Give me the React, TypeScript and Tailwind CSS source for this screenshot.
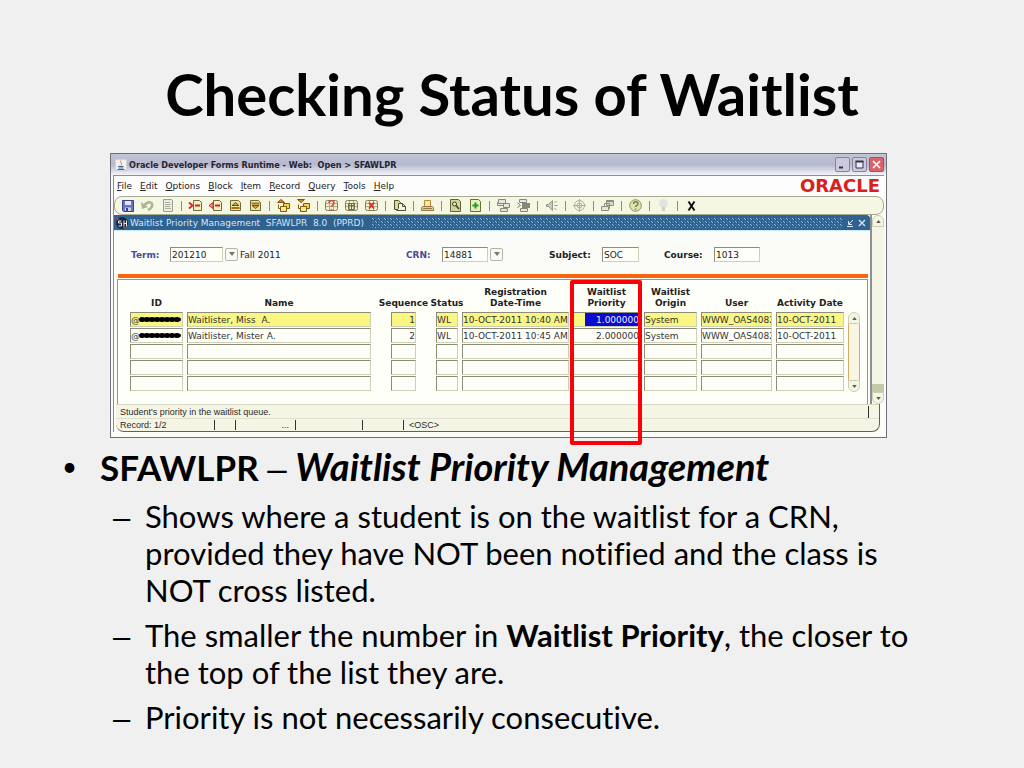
import React from "react";

type Waitlister = {
  id: string;
  name: string;
  sequence: string;
  status: string;
  registered: string;
  priority: string;
  origin: string;
  user: string;
  activity: string;
};

type ColumnKey = keyof Waitlister;

const emptyRow: Waitlister = {
  id: "",
  name: "",
  sequence: "",
  status: "",
  registered: "",
  priority: "",
  origin: "",
  user: "",
  activity: "",
};

const rows: Waitlister[] = [
  {
    id: "@",
    name: "Waitlister, Miss  A.",
    sequence: "1",
    status: "WL",
    registered: "10-OCT-2011 10:40 AM",
    priority: "1.000000",
    origin: "System",
    user: "WWW_OAS4082",
    activity: "10-OCT-2011",
  },
  {
    id: "@",
    name: "Waitlister, Mister A.",
    sequence: "2",
    status: "WL",
    registered: "10-OCT-2011 10:45 AM",
    priority: "2.000000",
    origin: "System",
    user: "WWW_OAS4082",
    activity: "10-OCT-2011",
  },
  emptyRow,
  emptyRow,
  emptyRow,
];

// Name has no fixed width, it takes whatever is left
const columns: { key: ColumnKey; title: string[]; width: string; pad: string; right?: boolean }[] = [
  { key: "id", title: ["ID"], width: "w-[57px]", pad: "pr-1" },
  { key: "name", title: ["Name"], width: "", pad: "pr-5" },
  { key: "sequence", title: ["Sequence"], width: "w-[45px]", pad: "pr-5", right: true },
  { key: "status", title: ["Status"], width: "w-[26px]", pad: "pr-1" },
  { key: "registered", title: ["Registration", "Date-Time"], width: "w-[111px]", pad: "pr-1" },
  { key: "priority", title: ["Waitlist", "Priority"], width: "w-[71px]", pad: "pr-1", right: true },
  { key: "origin", title: ["Waitlist", "Origin"], width: "w-[57px]", pad: "pr-1" },
  { key: "user", title: ["User"], width: "w-[75px]", pad: "pr-1" },
  { key: "activity", title: ["Activity Date"], width: "w-[68px]", pad: "" },
];

const menus = ["File", "Edit", "Options", "Block", "Item", "Record", "Query", "Tools", "Help"];

const Icon = ({ children }: { children: React.ReactNode }) => (
  <svg viewBox="0 0 15 15" className="block size-[15px]" fill="none" strokeWidth="1">
    {children}
  </svg>
);

const FolderSheet = () => <path d="M2.5 2.5h8l2 2v8h-10z" fill="#e9e5a4" stroke="#6f6a3a" />;

const Grid = () => (
  <>
    <rect x="1.5" y="2.5" width="12" height="10" rx="2" fill="#f3f1d2" stroke="#7d8054" />
    <path d="M2 5.5h11M2 8.5h11M5.5 3v9M9.5 3v9" stroke="#a9ac7c" />
  </>
);

const Folders = () => (
  <>
    <path d="M7.5 5.5h6v5h-6z" fill="#f4d04d" stroke="#7a5c12" />
    <path d="M4.5 8.5h6v5h-6z" fill="#fbe88a" stroke="#7a5c12" />
  </>
);

const toolGroups: { label: string; icon: React.ReactNode }[][] = [
  [
    {
      label: "Save",
      icon: (
        <Icon>
          <path d="M2.5 2.5h11v11h-10l-1-1z" fill="#6a74c0" stroke="#39428c" />
          <path d="M5 3h6v4H5z" fill="#e4e8fa" />
          <path d="M5 9.5h6V13H5z" fill="#c9cfe8" />
          <path d="M6 10h2v3H6z" fill="#39428c" />
        </Icon>
      ),
    },
    {
      label: "Rollback",
      icon: (
        <Icon>
          <path d="M4 8c2-4 7-5 8-2 .8 2.5-1 4.5-4 6" stroke="#a9b692" strokeWidth="2.6" />
          <path d="M1 4l1 7 6-2z" fill="#a9b692" />
        </Icon>
      ),
    },
    {
      label: "Select",
      icon: (
        <Icon>
          <path d="M3.5 1.5h8l1 1v11h-9z" fill="#eceddf" stroke="#9b9e90" />
          <path d="M5 4.5h5M5 6.5h6M5 8.5h5M5 10.5h6" stroke="#a9ac9e" />
        </Icon>
      ),
    },
  ],
  [
    {
      label: "Insert record",
      icon: (
        <Icon>
          <path d="M5.5 2.5h6l2 2v8h-8z" fill="#f2efc0" stroke="#6f6a3a" />
          <path d="M1 4.5l3.5 3L1 10.5" stroke="#d5232a" strokeWidth="1.8" />
          <path d="M7 7.5h5" stroke="#d5232a" strokeWidth="2" />
        </Icon>
      ),
    },
    {
      label: "Remove record",
      icon: (
        <Icon>
          <path d="M5.5 2.5h6l2 2v8h-8z" fill="#f2efc0" stroke="#6f6a3a" />
          <path d="M5 4.5v6L1 7.5z" fill="#f2a0a0" stroke="#c8282e" />
          <path d="M7 7.5h5" stroke="#d5232a" strokeWidth="2" />
        </Icon>
      ),
    },
    {
      label: "Previous record",
      icon: (
        <Icon>
          <FolderSheet />
          <path d="M4 7.5L7.5 4.5l3.5 3z" fill="#d9a441" stroke="#7a4a10" />
          <path d="M3.5 10h8" stroke="#a87018" strokeWidth="2" />
        </Icon>
      ),
    },
    {
      label: "Next record",
      icon: (
        <Icon>
          <FolderSheet />
          <path d="M3.5 5.5h8" stroke="#a87018" strokeWidth="2" />
          <path d="M4 7.5h7l-3.5 3z" fill="#d9a441" stroke="#7a4a10" />
        </Icon>
      ),
    },
  ],
  [
    {
      label: "Previous block",
      icon: (
        <Icon>
          <Folders />
          <path d="M1.5 4.5L5 1.5l3.5 3z" fill="#d9902a" stroke="#8a4a10" />
          <path d="M2.5 6.5v4h2" stroke="#7a5c12" />
        </Icon>
      ),
    },
    {
      label: "Next block",
      icon: (
        <Icon>
          <Folders />
          <path d="M1.5 1.5h7L5 4.5z" fill="#d9902a" stroke="#8a4a10" />
          <path d="M2.5 6.5v4h2" stroke="#7a5c12" />
        </Icon>
      ),
    },
  ],
  [
    {
      label: "Enter query",
      icon: (
        <Icon>
          <Grid />
          <path d="M5 5c0-3 5-3 5 0 0 2-2.5 2-2.5 4M7.5 11v2" stroke="#e0484e" strokeWidth="1.6" />
        </Icon>
      ),
    },
    {
      label: "Execute query",
      icon: (
        <Icon>
          <Grid />
          <path d="M4.5 5.5h6v6h-6zM4.5 7.5h6M7.5 6v5" stroke="#6c7042" />
        </Icon>
      ),
    },
    {
      label: "Cancel query",
      icon: (
        <Icon>
          <Grid />
          <path d="M5 4.5l5 6M10 4.5l-5 6" stroke="#d5232a" strokeWidth="1.6" />
        </Icon>
      ),
    },
  ],
  [
    {
      label: "View attachment",
      icon: (
        <Icon>
          <path d="M2.5 2.5h4l2 2v7h-6z" fill="#dcd9a0" stroke="#4e5034" />
          <path d="M6.5 5.5h4l3 3v4h-9l2-2z" fill="#f6f5df" stroke="#4e5034" />
          <path d="M10.5 5.5v3h3" stroke="#4e5034" />
        </Icon>
      ),
    },
  ],
  [
    {
      label: "Print",
      icon: (
        <Icon>
          <path d="M4.5 2.5h6v6h-6z" fill="#fbe5a0" stroke="#b08a38" />
          <path d="M2.5 8.5h10l1 1v3h-12v-3z" fill="#e3cc84" stroke="#94784a" />
          <path d="M3 10.5h9" stroke="#94784a" />
        </Icon>
      ),
    },
  ],
  [
    {
      label: "View document",
      icon: (
        <Icon>
          <path d="M2.5 1.5h8l2 2v10h-10z" fill="#d3d59c" stroke="#62653a" />
          <circle cx="6.5" cy="6" r="2" stroke="#3c3f20" fill="#eef0cc" />
          <path d="M8 7.5l3 3.5" stroke="#3c3f20" strokeWidth="1.6" />
        </Icon>
      ),
    },
    {
      label: "Add document",
      icon: (
        <Icon>
          <path d="M2.5 1.5h8l2 2v10h-10z" fill="#e7eeb9" stroke="#62703a" />
          <path d="M7.5 4.5v6M4.5 7.5h6" stroke="#1f9a2c" strokeWidth="2" />
        </Icon>
      ),
    },
  ],
  [
    {
      label: "Workflow submit",
      icon: (
        <Icon>
          <path d="M2.5 1.5h7v4h-7zM7.5 5.5h6v4h-6zM4.5 10.5h7v3h-7zM1.5 4.5v3h6" fill="#e6e7da" stroke="#85877a" />
        </Icon>
      ),
    },
    {
      label: "Workflow release",
      icon: (
        <Icon>
          <path d="M3.5 1.5h7v3h-7zM4.5 10.5h7v3h-7zM1.5 4.5l3 3-3 2" fill="#e6e7da" stroke="#85877a" />
          <path d="M6 5h8v5H6z" fill="#85877a" />
        </Icon>
      ),
    },
  ],
  [
    {
      label: "Announcements",
      icon: (
        <Icon>
          <path d="M2.5 6.5h2l4-4v10l-4-4h-2z" fill="#c6c8ba" stroke="#96988a" />
          <path d="M10.5 5l2-2M10.5 7.5h3M10.5 10l2 2" stroke="#96988a" />
        </Icon>
      ),
    },
  ],
  [
    {
      label: "Target",
      icon: (
        <Icon>
          <circle cx="7.5" cy="7.5" r="5" stroke="#adafa3" />
          <circle cx="7.5" cy="7.5" r="2.5" stroke="#adafa3" />
          <path d="M7.5 1v13M1 7.5h13" stroke="#adafa3" />
        </Icon>
      ),
    },
  ],
  [
    {
      label: "Related windows",
      icon: (
        <Icon>
          <path d="M6.5 2.5h7v5h-7z" fill="#d6d8ca" stroke="#8b8d80" />
          <path d="M6.5 3.5h7" stroke="#8b8d80" />
          <path d="M1.5 8.5h7v4h-7z" fill="#e6e7da" stroke="#8b8d80" />
          <path d="M4.5 8.5v-3h5v5h-1" stroke="#8b8d80" />
        </Icon>
      ),
    },
  ],
  [
    {
      label: "Online help",
      icon: (
        <Icon>
          <circle cx="7.5" cy="7.5" r="5.8" fill="#dfe3ae" stroke="#8c9160" />
          <path d="M5.5 6c0-3 4.5-3 4.5 0 0 1.5-2.5 1.5-2.5 3M7.5 10.5v1.3" stroke="#7c8052" strokeWidth="1.5" />
        </Icon>
      ),
    },
  ],
  [
    {
      label: "Hint",
      icon: (
        <Icon>
          <circle cx="7.5" cy="5.5" r="4.5" fill="#e3e4dc" />
          <path d="M6 9h3v4H6z" fill="#cfd0c6" />
        </Icon>
      ),
    },
  ],
  [
    {
      label: "Exit",
      icon: (
        <Icon>
          <path d="M4.5 3.5l6 9M10.5 3.5l-6 9" stroke="#111111" strokeWidth="2" />
        </Icon>
      ),
    },
  ],
];

const fieldBorder = "border border-t-[#8c8c78] border-l-[#8c8c78] border-r-[#cdd0b4] border-b-[#cdd0b4] outline-none";

// Label, text box and an optional list-of-values button
const KeyField = ({
  id,
  label,
  value,
  labelClass,
  inputClass,
  lov = false,
  note,
}: {
  id: string;
  label: string;
  value: string;
  labelClass: string;
  inputClass: string;
  lov?: boolean;
  note?: string;
}) => (
  <div className="flex items-center whitespace-nowrap">
    <label htmlFor={id} className={`font-bold ${labelClass}`}>
      {label}
    </label>
    <input id={id} defaultValue={value} className={`h-[15px] bg-[#fffffa] px-px ${fieldBorder} ${inputClass}`} />
    {lov && (
      <button
        type="button"
        aria-label={`${label} list of values`}
        className="ml-0.5 flex h-[13px] w-[13px] justify-center rounded-xs border border-[#b5b5a8] bg-[#fafaf4] pt-[3px]"
      >
        <svg viewBox="0 0 6 4" className="h-1 w-1.5">
          <path d="M0 0h6L3 4z" fill="#77776c" />
        </svg>
      </button>
    )}
    {note && <span className="ml-0.5">{note}</span>}
  </div>
);

const ScrollArrow = ({ label, up = false }: { label: string; up?: boolean }) => (
  <button
    type="button"
    aria-label={label}
    className={`flex h-3 w-full shrink-0 items-center justify-center border border-[#cdcdb2] bg-[#f5f5e4] ${up ? "rounded-t-md" : "rounded-b-md"}`}
  >
    <svg viewBox="0 0 6 4" className="h-[3px] w-[5px]">
      <path d={up ? "M0 4h6L3 0z" : "M0 0h6L3 4z"} fill="#5b5b50" />
    </svg>
  </button>
);

const TitleBar = () => (
  <div className="flex h-[21px] items-center bg-linear-to-b from-[#c3c4d6] via-[#b6b8ce] to-[#f4f4fa] pr-0.5 pl-1">
    <svg viewBox="0 0 12 12" className="size-3">
      <rect width="12" height="12" fill="#f3f1ec" stroke="#b5b6c2" />
      <path d="M6 1.5c-2 2 2 2.5 0 5" stroke="#e07a2a" fill="none" />
      <path d="M3 7.5h5.5M3.5 9h5M2.5 10.5h7" stroke="#3f6ea5" fill="none" />
    </svg>
    <span className="ml-0.5 font-['DejaVu_Sans_Condensed','DejaVu_Sans',sans-serif] text-[9px] leading-3 font-bold whitespace-pre text-[#26262e]">
      Oracle Developer Forms Runtime - Web:  Open &gt; SFAWLPR
    </span>
    <div className="ml-auto flex gap-0.5">
      <button type="button" aria-label="Minimize" className="size-[15px] rounded-xs border border-[#85869c] bg-[#c9cadc]">
        <svg viewBox="0 0 13 13">
          <path d="M3 9.5h4" stroke="#33344a" strokeWidth="2" />
        </svg>
      </button>
      <button type="button" aria-label="Maximize" className="size-[15px] rounded-xs border border-[#85869c] bg-[#c9cadc]">
        <svg viewBox="0 0 13 13">
          <path d="M3 3.5h7v6.5H3z" stroke="#33344a" fill="#ececf4" />
          <path d="M2.5 3.5h8" stroke="#33344a" strokeWidth="2" />
        </svg>
      </button>
      <button type="button" aria-label="Close" className="size-[15px] rounded-xs border border-[#a5555c] bg-[#d8646a]">
        <svg viewBox="0 0 13 13">
          <path d="M3 3l7 7M10 3l-7 7" stroke="#ffffff" strokeWidth="1.6" />
        </svg>
      </button>
    </div>
  </div>
);

const MenuBar = () => (
  <div className="flex h-[21px] items-center border-t border-[#8e8e98] bg-[#fdfdfd] pr-1 pl-[3px]">
    <nav className="flex gap-2 text-[#222222]">
      {menus.map((menu) => (
        <button type="button" key={menu}>
          <u className="underline-offset-1">{menu[0]}</u>
          {menu.slice(1)}
        </button>
      ))}
    </nav>
    <span className="ml-auto text-[18px] leading-4 font-bold text-[#d8201c]">ORACLE</span>
  </div>
);

const Toolbar = () => (
  <div className="flex h-[19px] items-center gap-[5px] rounded-lg border border-[#a9aa92] bg-[#f6f7e2] pl-[5px]">
    {toolGroups.map((group, index) => (
      <React.Fragment key={group[0].label}>
        {index > 0 && (
          <span className="flex w-[3px] justify-center">
            <span className="h-2.5 w-px bg-[#8f907c]" />
          </span>
        )}
        {group.map((tool) => (
          <button type="button" key={tool.label} aria-label={tool.label}>
            {tool.icon}
          </button>
        ))}
      </React.Fragment>
    ))}
  </div>
);

const FormTitle = () => (
  <div className="flex h-4 items-center rounded-tr-sm border-b border-[#c8ecf6] bg-[#2f6191] pr-1 pl-0.5">
    <svg viewBox="0 0 12 12" className="size-3">
      <circle cx="6" cy="6" r="6" fill="#182444" />
      <path d="M5.5 4h-3v2h3v3h-3M8 3.5v6M10.5 3.5v6M8 6.5h2" stroke="#f0ece6" fill="none" />
      <path d="M0 1l3 2M7 10l3 1" stroke="#d43a34" strokeWidth="1.5" />
    </svg>
    <h2 className="ml-0.5 text-[9px] leading-3 whitespace-pre text-[#d5e6f4]">
      Waitlist Priority Management  SFAWLPR  8.0  (PPRD)
    </h2>
    <svg className="ml-2 h-2.5 min-w-0 flex-1">
      <defs>
        <pattern id="weave" width="6" height="6" patternUnits="userSpaceOnUse">
          <path d="M0 0h1v1H0zM1 1h1v1H1zM3 3h1v1H3zM4 4h1v1H4z" fill="#8fc0de" />
          <path d="M3 0h1v1H3zM0 3h1v1H0zM4 1h1v1H4zM1 4h1v1H1z" fill="#4a83b0" />
          <path d="M2 1h1v1H2zM5 4h1v1H5z" fill="#1c4470" />
        </pattern>
      </defs>
      <rect width="100%" height="100%" fill="url(#weave)" />
    </svg>
    <button type="button" aria-label="Restore form" className="ml-1">
      <svg viewBox="0 0 8 8" className="size-2">
        <path d="M7 1L3 5M2.5 2v3.5H6M1 7.5h6" stroke="#d5e6f4" fill="none" />
      </svg>
    </button>
    <button type="button" aria-label="Close form" className="ml-1">
      <svg viewBox="0 0 8 8" className="size-2">
        <path d="M1 1l6 6M7 1L1 7" stroke="#d5e6f4" strokeWidth="1.4" />
      </svg>
    </button>
  </div>
);

const cellColor = (key: ColumnKey, row: number) => {
  if (row > 0) return "bg-[#fffffa] text-[#333333]";
  if (key === "priority") return "bg-[linear-gradient(90deg,#f9f684_11px,#0a0ad0_11px)] text-[#f0f0ff]";
  return "bg-[#f9f684] text-[#333333]";
};

const WaitlistTable = () => (
  <table className="w-full min-w-0 flex-1 table-fixed border-collapse">
    <thead>
      <tr>
        {columns.map((column) => (
          <th key={column.key} scope="col" className={`h-[26px] p-0 pb-[3px] align-bottom ${column.width} ${column.pad}`}>
            <div className="flex flex-col items-center leading-[11px] whitespace-nowrap">
              {column.title.map((line) => (
                <span key={line}>{line}</span>
              ))}
            </div>
          </th>
        ))}
      </tr>
    </thead>
    <tbody>
      {rows.map((row, index) => (
        <tr key={index}>
          {columns.map((column) => (
            <td key={column.key} className={`p-0 pb-px ${column.pad}`}>
              <div className="relative">
                <input
                  aria-label={`${column.title.join(" ")} ${index + 1}`}
                  defaultValue={row[column.key]}
                  className={`block h-[15px] w-full px-0 ${fieldBorder} ${cellColor(column.key, index)} ${column.right ? "text-right" : ""}`}
                />
                {column.key === "id" && row.id && (
                  <svg viewBox="0 0 42 7" className="absolute top-1 right-0.5 h-[7px] w-[42px]">
                    <path d="M2 3.5h38" stroke="#000000" strokeWidth="4" strokeLinecap="round" />
                    <path d="M3 3.5h38" stroke="#000000" strokeWidth="5" strokeLinecap="round" strokeDasharray="0 5" />
                  </svg>
                )}
              </div>
            </td>
          ))}
        </tr>
      ))}
    </tbody>
  </table>
);

const StatusBar = () => (
  <div className="mr-1 ml-0.5 rounded-b-lg border-r border-b border-[#5f6058] bg-[#f4f5e4] font-['Liberation_Sans',Arial,sans-serif] text-[#2b2b2b]">
    <div className="flex h-[14px] items-center border-t border-[#d6d8c2] pr-2.5 pl-1">
      <span className="flex-1">Student's priority in the waitlist queue.</span>
      <span className="h-3 w-px bg-[#33332c]" />
    </div>
    <div className="flex h-[13px] items-center border-t border-[#dfe0cc] pl-1">
      <span className="w-[94px]">Record: 1/2</span>
      <span className="h-2.5 w-[21px] border-l border-[#33332c]" />
      <span className="h-2.5 w-[60px] border-l border-[#33332c] pr-1.5 text-right leading-2.5">...</span>
      <span className="h-2.5 w-[67px] border-l border-[#33332c]" />
      <span className="h-2.5 w-[41px] border-l border-[#33332c]" />
      <span className="h-2.5 border-l border-[#33332c] pl-[5px] leading-2.5">&lt;OSC&gt;</span>
    </div>
  </div>
);

const FormsWindow = () => (
  <div className="relative mr-[137px] ml-[110px] border border-[#6f707c] bg-[#fbfbf8] pb-[5px] font-['DejaVu_Sans',Verdana,sans-serif] text-[9px] leading-3 text-[#222222]">
    <TitleBar />
    <div className="mr-0.5 ml-0.5 border-l border-[#8a8b98]">
      <MenuBar />
      <Toolbar />
      <div className="flex">
        <div className="min-w-0 flex-1 border-r-2 border-[#8d8e96]">
          <FormTitle />
          <div className="grid grid-cols-[275px_143px_115px_auto] pt-4 pb-3 pl-[17px]">
            <KeyField id="term" label="Term:" value="201210" labelClass="w-[39px] text-[#4a4a9a]" inputClass="w-[53px]" lov note="Fall 2011" />
            <KeyField id="crn" label="CRN:" value="14881" labelClass="w-9 text-[#4a4a9a]" inputClass="w-[46px]" lov />
            <KeyField id="subject" label="Subject:" value="SOC" labelClass="w-[53px]" inputClass="w-[37px]" />
            <KeyField id="course" label="Course:" value="1013" labelClass="w-[50px]" inputClass="w-[46px]" />
          </div>
          <div className="mr-0.5 ml-1 h-1 bg-[#f8650c]" />
          <div className="mt-px mr-0.5 ml-[3px] flex border-t border-r border-l border-[#96968c] bg-[#fffffa] pt-1.5 pr-[7px] pb-3 pl-3">
            <WaitlistTable />
            <div className="mt-[26px] ml-1 flex w-3 shrink-0 flex-col">
              <ScrollArrow label="Previous rows" up />
              <div className="flex-1 border-x border-[#cfae6c] bg-[#fbf6e4]" />
              <ScrollArrow label="Next rows" />
            </div>
          </div>
        </div>
        <div className="flex w-3 shrink-0 flex-col">
          <ScrollArrow label="Scroll up" up />
          <div className="flex-1 bg-[#f4f5e4]" />
          <div className="h-2 bg-[#c3c9a4]" />
          <ScrollArrow label="Scroll down" />
        </div>
      </div>
      <StatusBar />
    </div>
    {/* Callout around the Priority column */}
    <div className="pointer-events-none absolute top-[126px] right-[244px] -bottom-2 w-[72px] rounded-xs border-4 border-[#fb0006]" />
  </div>
);

const Dash = () => <span className="font-['Liberation_Sans',Arial,sans-serif] font-normal">–</span>;

const points: React.ReactNode[] = [
  "Shows where a student is on the waitlist for a CRN, provided they have NOT been notified and the class is NOT cross listed.",
  <>
    The smaller the number in <b>Waitlist Priority</b>, the closer to the top of the list they are.
  </>,
  "Priority is not necessarily consecutive.",
];

export default function App() {
  return (
    <main className="min-h-screen bg-[#f0f0f0] pt-[58px] font-[Lato,Calibri,sans-serif] text-black [font-variant-ligatures:none]">
      <h1 className="mb-[23px] text-center text-[58px] leading-[72px] font-bold">Checking Status of Waitlist</h1>
      <FormsWindow />
      <ul className="pt-[7px] pr-[86px] pl-[62px]">
        <li className="flex">
          <span className="w-[38px] shrink-0 text-[26px] leading-[42px]">•</span>
          <p className="text-[35px] leading-[42px] font-bold">
            SFAWLPR <Dash /> <i className="text-[38px]">Waitlist Priority Management</i>
          </p>
        </li>
        {points.map((point, index) => (
          <li key={index} className="mt-2 flex pl-[51px] text-[31px] leading-[37px]">
            <span className="w-8 shrink-0">
              <Dash />
            </span>
            <p>{point}</p>
          </li>
        ))}
      </ul>
    </main>
  );
}
